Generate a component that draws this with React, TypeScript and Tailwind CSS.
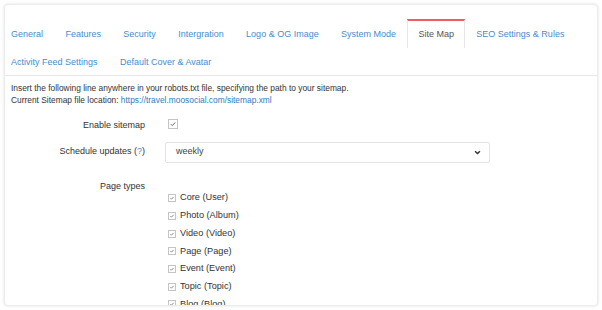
import React from 'react';

const rowOne = ['General', 'Features', 'Security', 'Intergration', 'Logo & OG Image', 'System Mode', 'Site Map', 'SEO Settings & Rules'];
const rowTwo = ['Activity Feed Settings', 'Default Cover & Avatar'];
const pageTypes = ['Core (User)', 'Photo (Album)', 'Video (Video)', 'Page (Page)', 'Event (Event)', 'Topic (Topic)', 'Blog (Blog)'];

function Check({ size }: { size: number }) {
  return (
    <span
      className="inline-flex items-center justify-center border border-[#c4c4c4] bg-white shrink-0"
      style={{ width: size, height: size }}
    >
      <svg viewBox="0 0 10 10" className="w-full h-full">
        <path d="M2.3 5.2 L4.1 7 L7.8 3.1" fill="none" stroke="#5f5f5f" strokeWidth="1.2" />
      </svg>
    </span>
  );
}

function Tab({ label, first, active, tall }: { label: string; first?: boolean; active?: boolean; tall?: boolean }) {
  return (
    <li
      className={
        'flex items-center pr-[10.2px] border-x text-[9px] ' +
        (tall ? 'h-[29px] ' : 'h-[27px] ') +
        (first ? 'pl-[5px] ' : 'pl-[10.2px] ') +
        (active
          ? 'border-[#e6e6e6] border-t-2 border-t-[#f25b63] bg-white text-[#555555]'
          : 'border-transparent border-t-2 border-t-transparent text-[#4a8bcc]')
      }
    >
      {label}
    </li>
  );
}

export default function App() {
  return (
    <div className="w-[602px] h-[310px] bg-white p-[4px] font-['Liberation_Sans',Arial,sans-serif] text-[#333333]">
      <div className="h-[302px] overflow-hidden rounded-[4px] border border-[#ececec] bg-white shadow-[0_0_3px_rgba(0,0,0,0.12)]">
        <div className="pt-[14px] border-b border-[#e8e8e8]">
          <ul className="flex">
            {rowOne.map((t, i) => (
              <Tab key={t} label={t} first={i === 0} active={t === 'Site Map'} tall />
            ))}
          </ul>
          <ul className="flex">
            {rowTwo.map((t, i) => (
              <Tab key={t} label={t} first={i === 0} />
            ))}
          </ul>
        </div>

        <div className="pt-[6px] pl-[6px] text-[8.4px] leading-[12px]">
          <div>Insert the following line anywhere in your robots.txt file, specifying the path to your sitemap.</div>
          <div>
            Current Sitemap file location:{' '}
            <span className="text-[#337ab7]">https://travel.moosocial.com/sitemap.xml</span>
          </div>
        </div>

        <div className="text-[9px]">
          <div className="flex items-center h-[20px] mt-[9.5px]">
            <div className="w-[155px] pr-[15px] text-right">Enable sitemap</div>
            <div className="pl-[8px]">
              <Check size={10} />
            </div>
          </div>

          <div className="flex items-center mt-[6px]">
            <div className="w-[155px] pr-[15px] text-right">
              Schedule updates (<span className="text-[#4a8bcc]">?</span>)
            </div>
            <div className="ml-[5px] w-[325px] h-[21px] border border-[#e3e3e3] rounded-[2px] flex items-center justify-between pl-[10px] pr-[8px]">
              <span className="text-[#444444]">weekly</span>
              <svg viewBox="0 0 10 10" className="w-[7px] h-[7px]">
                <path d="M1.5 3.2 L5 6.6 L8.5 3.2" fill="none" stroke="#333" strokeWidth="2" />
              </svg>
            </div>
          </div>

          <div className="flex mt-[17px]">
            <div className="w-[155px] pr-[15px] text-right leading-[12px]">Page types</div>
            <div className="pt-[10px] pl-[8px]">
              {pageTypes.map((p) => (
                <div key={p} className="h-[17.7px] flex items-center gap-[4px]">
                  <Check size={8} />
                  <span className="text-[9.2px]">{p}</span>
                </div>
              ))}
            </div>
          </div>
        </div>
      </div>
    </div>
  );
}
